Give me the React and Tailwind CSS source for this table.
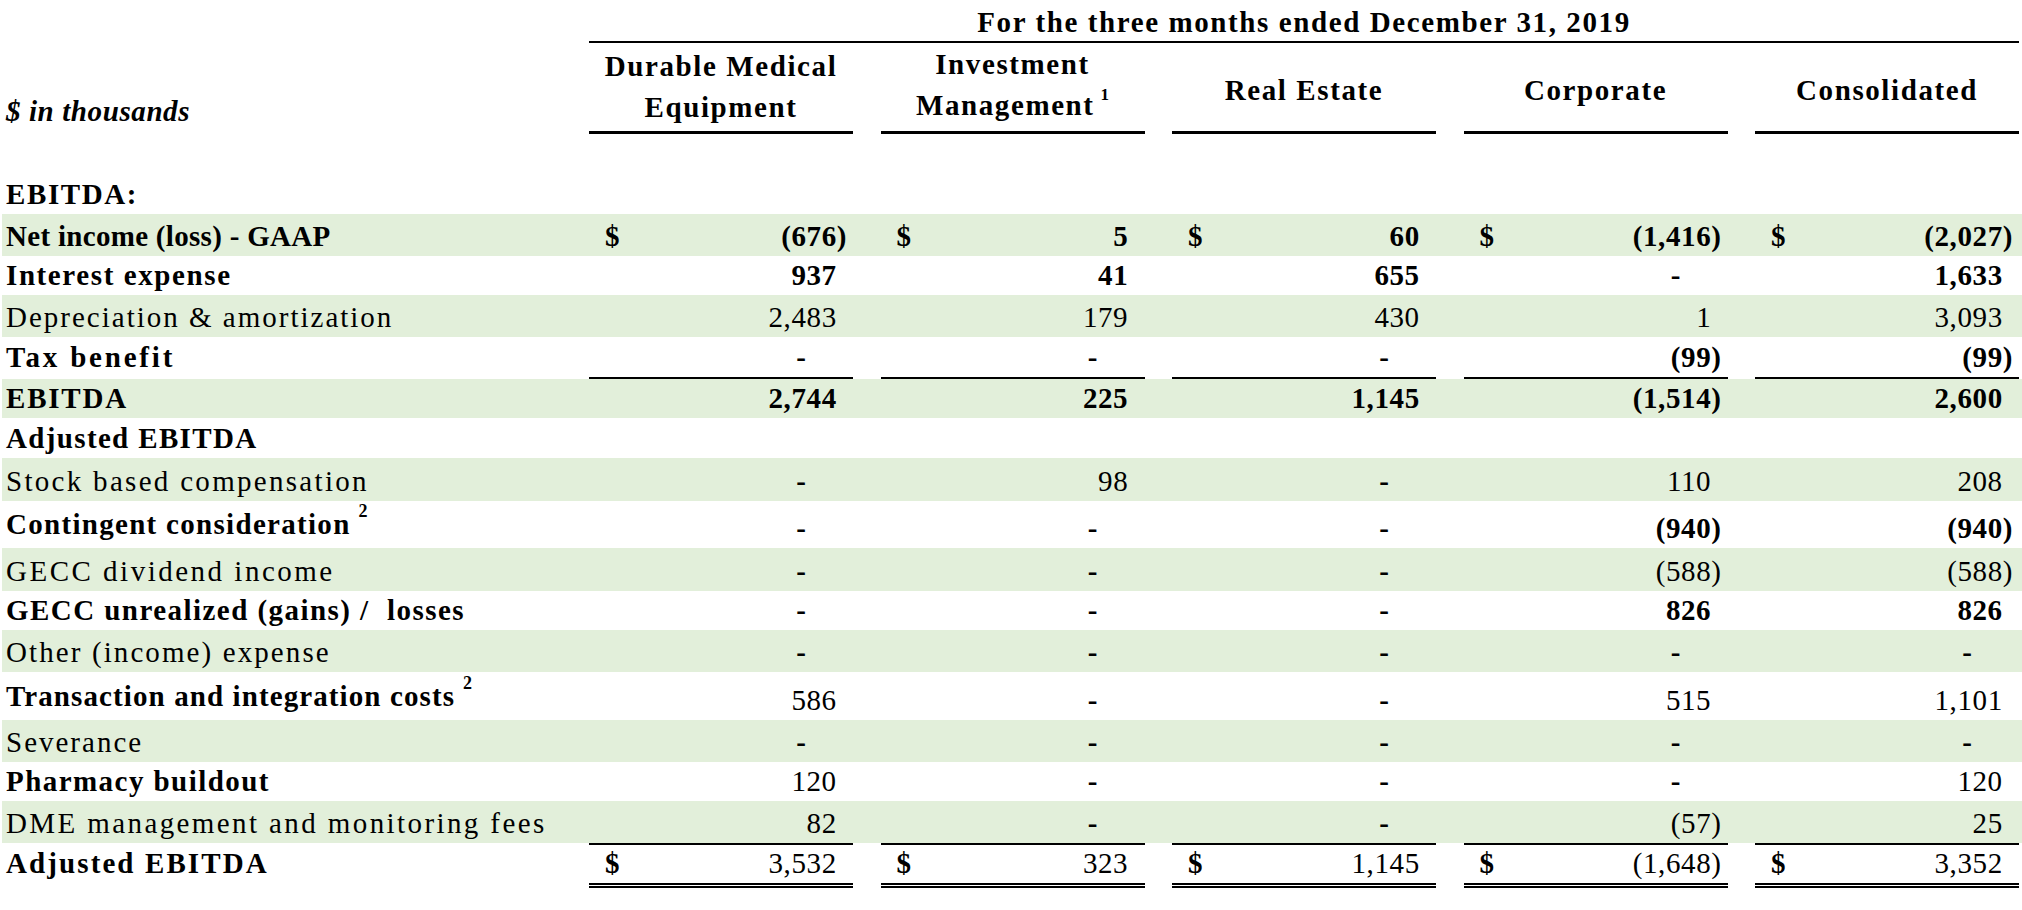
import React from "react";

const GRID = "grid grid-cols-[559.5px_repeat(5,264px)] gap-x-[27.5px]";

const ROWS = [
  { label: "Net income (loss) - GAAP", b: true, g: true, h: "h-[42px]", t: "tracking-[0.3px]", nb: true, dollar: true, v: ["(676)", "5", "60", "(1,416)", "(2,027)"] },
  { label: "Interest expense", b: true, h: "h-[39px]", t: "tracking-[1.6px]", nb: true, v: ["937", "41", "655", "-", "1,633"] },
  { label: "Depreciation & amortization", g: true, h: "h-[42px]", t: "tracking-[2px]", v: ["2,483", "179", "430", "1", "3,093"] },
  { label: "Tax benefit", b: true, h: "h-[42px]", t: "tracking-[2.8px]", nb: true, under: true, lpb: "pb-[5px]", v: ["-", "-", "-", "(99)", "(99)"] },
  { label: "EBITDA", b: true, g: true, h: "h-[39px]", t: "tracking-[1.8px]", nb: true, v: ["2,744", "225", "1,145", "(1,514)", "2,600"] },
  { label: "Adjusted EBITDA", b: true, h: "h-[40px]", t: "tracking-[1.35px]", v: null },
  { label: "Stock based compensation", g: true, h: "h-[43px]", t: "tracking-[2.3px]", v: ["-", "98", "-", "110", "208"] },
  { label: "Contingent consideration", sup: "2", b: true, h: "h-[47px]", t: "tracking-[1.3px]", nb: true, v: ["-", "-", "-", "(940)", "(940)"] },
  { label: "GECC dividend income", g: true, h: "h-[43px]", t: "tracking-[2.5px]", v: ["-", "-", "-", "(588)", "(588)"] },
  { label: "GECC unrealized (gains) /  losses", b: true, h: "h-[39px]", t: "tracking-[1.45px]", nb: true, v: ["-", "-", "-", "826", "826"] },
  { label: "Other (income) expense", g: true, h: "h-[42px]", t: "tracking-[2.1px]", v: ["-", "-", "-", "-", "-"] },
  { label: "Transaction and integration costs", sup: "2", b: true, h: "h-[48px]", t: "tracking-[1.1px]", v: ["586", "-", "-", "515", "1,101"] },
  { label: "Severance", g: true, h: "h-[42px]", t: "tracking-[2px]", v: ["-", "-", "-", "-", "-"] },
  { label: "Pharmacy buildout", b: true, h: "h-[39px]", t: "tracking-[1.45px]", v: ["120", "-", "-", "-", "120"] },
  { label: "DME management and monitoring fees", g: true, h: "h-[42px]", t: "tracking-[2.4px]", v: ["82", "-", "-", "(57)", "25"] },
];

function Num({ v, bold }) {
  const w = bold ? "font-bold" : "font-normal";
  if (v === "-") {
    return (
      <span className="font-bold">
        -<span className="invisible">00)</span>
      </span>
    );
  }
  if (v.startsWith("(")) return <span className={w}>{v}</span>;
  return (
    <span className={w}>
      {v}
      <span className="invisible">)</span>
    </span>
  );
}

function Cell({ v, bold, dollar }) {
  return (
    <div className="flex h-full items-end justify-between pl-4 pr-[6px] pb-[3px] leading-[33px] tracking-[0.6px]">
      <span className="font-bold">{dollar ? "$" : ""}</span>
      <Num v={v} bold={bold} />
    </div>
  );
}

function Label({ row }) {
  const weight = row.b ? "font-bold" : "font-normal";
  return (
    <div className={`flex items-end pl-[4px] leading-[33px] whitespace-pre ${row.lpb || "pb-[3px]"} ${weight} ${row.t}`}>
      <span>
        {row.label}
        {row.sup ? (
          <span className="relative -top-[17px] ml-[8px] text-[18px] tracking-normal">{row.sup}</span>
        ) : null}
      </span>
    </div>
  );
}

export default function App() {
  const heads = [
    { lines: ["Durable Medical", "Equipment"] },
    { lines: ["Investment", "Management"], sup: "1" },
    { lines: ["Real Estate"] },
    { lines: ["Corporate"] },
    { lines: ["Consolidated"] },
  ];
  const finals = ["3,532", "323", "1,145", "(1,648)", "3,352"];

  return (
    <div className="w-[2022px] h-[910px] bg-white pl-[2px] text-[29px] text-black font-['Liberation_Serif','Times_New_Roman',serif]">
      {/* title row */}
      <div className={`${GRID} h-[43px]`}>
        <div />
        <div className="col-span-5 flex items-end justify-center border-b-2 border-black pb-[2px] leading-[33px] font-bold tracking-[1.6px]">
          For the three months ended December 31, 2019
        </div>
      </div>

      {/* column header row */}
      <div className={`${GRID} h-[91px]`}>
        <div className="flex items-end pl-[4px] pb-[6px] leading-[33px] font-bold italic tracking-[0.6px]">
          $ in thousands
        </div>
        {heads.map((h, i) => (
          <div
            key={i}
            className="flex flex-col items-center justify-center border-b-[3px] border-black text-center leading-[41px] font-bold tracking-[1.6px]"
          >
            {h.lines.length === 1 ? (
              <span className="mt-[6px]">{h.lines[0]}</span>
            ) : (
              h.lines.map((l, j) => (
                <span key={j}>
                  {l}
                  {h.sup && j === 1 ? (
                    <span className="relative -top-[15px] ml-[6px] text-[17px] tracking-normal">{h.sup}</span>
                  ) : null}
                </span>
              ))
            )}
          </div>
        ))}
      </div>

      {/* spacer */}
      <div className="h-[39px]" />

      {/* EBITDA: */}
      <div className={`${GRID} h-[41px]`}>
        <div className="flex items-end pl-[4px] pb-[3px] leading-[33px] font-bold tracking-[1.6px]">EBITDA:</div>
      </div>

      {ROWS.map((row, i) => (
        <div key={i} className={`${GRID} ${row.h} ${row.g ? "bg-[#e2efda]" : ""}`}>
          <Label row={row} />
          {row.v
            ? row.v.map((v, j) => (
                <div key={j} className={row.under ? "border-b-2 border-black" : ""}>
                  <Cell v={v} bold={row.nb} dollar={row.dollar} />
                </div>
              ))
            : null}
        </div>
      ))}

      {/* Adjusted EBITDA total */}
      <div className={`${GRID} h-[45px]`}>
        <Label row={{ label: "Adjusted EBITDA", b: true, lpb: "pb-[8px]", t: "tracking-[2.1px]" }} />
        {finals.map((v, j) => (
          <div key={j} className="flex flex-col border-t-2 border-black">
            <div className="flex-1 border-b-[5px] border-double border-black">
              <Cell v={v} bold={false} dollar={true} />
            </div>
          </div>
        ))}
      </div>
    </div>
  );
}
